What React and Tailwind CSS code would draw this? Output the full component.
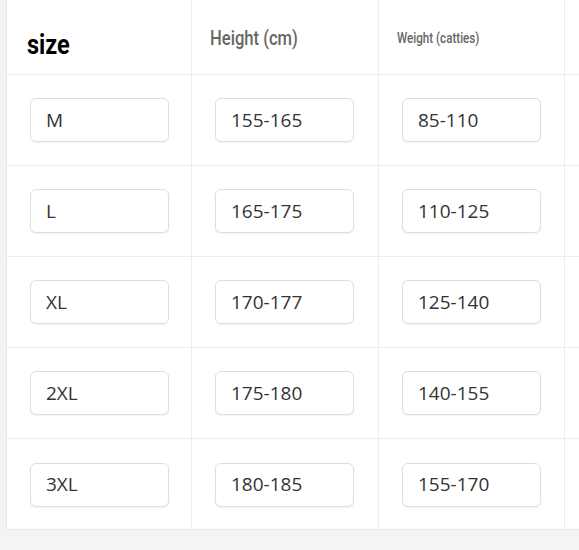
const rows = [
  ['M', '155-165', '85-110'],
  ['L', '165-175', '110-125'],
  ['XL', '170-177', '125-140'],
  ['2XL', '175-180', '140-155'],
  ['3XL', '180-185', '155-170'],
];

const cond = { fontFamily: 'Roboto, "Liberation Sans", sans-serif' };

const Box = ({ children }) => (
  <div className="ml-[23px] flex h-[44px] w-[139px] items-center rounded-md border border-[#dedede] bg-white pl-[15px] text-[19px] text-[#333] shadow-[0_1px_2px_rgba(0,0,0,0.05)]">
    {children}
  </div>
);

export default function App() {
  return (
    <div
      className="h-[550px] w-[579px] overflow-hidden bg-[#f4f4f4]"
      style={{ fontFamily: '"Open Sans", "Noto Sans", sans-serif' }}
    >
      <div className="ml-[6px] grid h-[530px] grid-cols-[185px_187px_186px_1fr] grid-rows-[75px_repeat(5,91px)] border-b border-l border-[#e6e6e6] bg-white">
        <div className="flex items-center border-b border-r border-[#ececec] pl-[20px] pt-[16px]">
          <span className="inline-block origin-left scale-x-[0.84] text-[28px] font-bold text-black" style={cond}>size</span>
        </div>
        <div className="flex items-center border-b border-r border-[#ececec] pl-[18px] pt-[1px]">
          <span className="inline-block origin-left scale-x-[0.83] text-[20px] font-medium text-[#666]" style={cond}>Height (cm)</span>
        </div>
        <div className="flex items-center border-b border-r border-[#ececec] pl-[18px] pt-[3px]">
          <span className="inline-block origin-left scale-x-[0.83] text-[14px] font-medium text-[#666]" style={cond}>Weight (catties)</span>
        </div>
        <div className="border-b border-[#ececec]" />
        {rows.map((r, i) => (
          <div key={i} className="contents">
            {r.map((v, j) => (
              <div
                key={j}
                className={`flex items-center border-r border-[#ececec] ${i < rows.length - 1 ? 'border-b' : ''}`}
              >
                <Box>{v}</Box>
              </div>
            ))}
            <div className={`border-[#ececec] ${i < rows.length - 1 ? 'border-b' : ''}`} />
          </div>
        ))}
      </div>
    </div>
  );
}
